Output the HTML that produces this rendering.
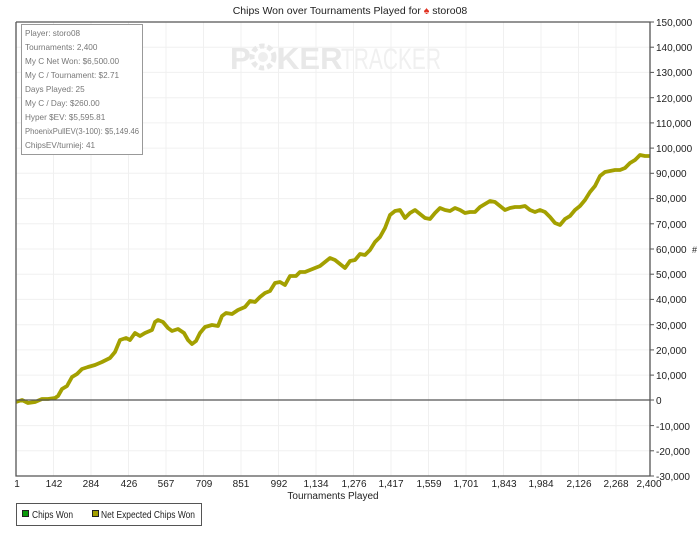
<!DOCTYPE html>
<html><head><meta charset="utf-8"><style>
html,body{margin:0;padding:0;background:#fff;}
body{width:700px;height:538px;overflow:hidden;font-family:"Liberation Sans",Arial,sans-serif;}
</style></head><body>
<svg width="700" height="538" xmlns="http://www.w3.org/2000/svg" style="position:absolute;left:0;top:0">
<g stroke="#f0f0f0" stroke-width="1">
<line x1="53.5" y1="22" x2="53.5" y2="476"/><line x1="91" y1="22" x2="91" y2="476"/><line x1="128.5" y1="22" x2="128.5" y2="476"/><line x1="166" y1="22" x2="166" y2="476"/><line x1="203.5" y1="22" x2="203.5" y2="476"/><line x1="241" y1="22" x2="241" y2="476"/><line x1="278.5" y1="22" x2="278.5" y2="476"/><line x1="316" y1="22" x2="316" y2="476"/><line x1="353.5" y1="22" x2="353.5" y2="476"/><line x1="391" y1="22" x2="391" y2="476"/><line x1="428.5" y1="22" x2="428.5" y2="476"/><line x1="466" y1="22" x2="466" y2="476"/><line x1="503.5" y1="22" x2="503.5" y2="476"/><line x1="541" y1="22" x2="541" y2="476"/><line x1="578.5" y1="22" x2="578.5" y2="476"/><line x1="616" y1="22" x2="616" y2="476"/>
<line x1="16" y1="47.2" x2="650" y2="47.2"/><line x1="16" y1="72.4" x2="650" y2="72.4"/><line x1="16" y1="97.7" x2="650" y2="97.7"/><line x1="16" y1="122.9" x2="650" y2="122.9"/><line x1="16" y1="148.1" x2="650" y2="148.1"/><line x1="16" y1="173.3" x2="650" y2="173.3"/><line x1="16" y1="198.6" x2="650" y2="198.6"/><line x1="16" y1="223.8" x2="650" y2="223.8"/><line x1="16" y1="249" x2="650" y2="249"/><line x1="16" y1="274.2" x2="650" y2="274.2"/><line x1="16" y1="299.4" x2="650" y2="299.4"/><line x1="16" y1="324.7" x2="650" y2="324.7"/><line x1="16" y1="349.9" x2="650" y2="349.9"/><line x1="16" y1="375.1" x2="650" y2="375.1"/><line x1="16" y1="425.6" x2="650" y2="425.6"/><line x1="16" y1="450.8" x2="650" y2="450.8"/>
</g>
<text x="230" y="69" font-size="31" font-weight="bold" fill="#e8e8e8">P</text>
<circle cx="263" cy="57" r="11" fill="none" stroke="#e8e8e8" stroke-width="5" stroke-dasharray="5 3"/>
<circle cx="263" cy="57" r="5" fill="#eeeeee"/>
<text x="277" y="69" font-size="31" font-weight="bold" fill="#e8e8e8">KER</text>
<text x="341" y="69" font-size="30" fill="#f0f0f0" textLength="100" lengthAdjust="spacingAndGlyphs">TRACKER</text>
<text x="350" y="14" font-size="10.5" fill="#222" text-anchor="middle">Chips Won over Tournaments Played for <tspan fill="#e03020">♠</tspan> storo08</text>
<polyline fill="none" stroke="#a3a000" stroke-width="3.8" stroke-linejoin="round" points="16,402 22,400 28,403 35,402 42,399 48,399 55,398 58,396 62,389 67,386 72,377 77,374 82,369 88,367 95,365 102,362 110,358 115,352 120,340 126,338 130,340 135,333 140,336 145,333 152,330 155,322 158,320 163,322 168,328 172,331 178,329 184,333 188,340 192,344 196,341 200,333 205,327 212,325 218,326 222,316 226,313 232,314 238,310 245,307 250,301 255,302 260,297 265,293 270,291 275,283 280,282 285,285 290,276 296,276 300,272 305,272 310,270 315,268 320,266 325,262 330,258 335,260 340,264 345,268 350,261 355,260 360,254 365,255 370,250 375,242 380,237 385,228 390,215 395,211 400,210 405,218 410,213 415,210 420,214 425,218 430,219 435,213 440,208 445,210 450,211 455,208 460,210 465,213 470,212 475,212 480,207 485,204 490,201 495,202 500,206 505,210 510,208 515,207 520,207 525,206 530,210 535,212 540,210 545,212 550,217 555,223 560,225 565,219 570,216 575,210 580,206 585,200 590,192 595,186 600,176 605,172 610,171 615,170 620,170 625,168 630,163 635,160 640,155 645,156 650,156"/>
<g stroke="#555" stroke-width="1.3" fill="none">
<line x1="16" y1="400" x2="650" y2="400"/>
<polyline points="16,22 650,22 650,476 16,476 16,22"/>
</g>
<g stroke="#555" stroke-width="1">
<line x1="650" y1="22" x2="654" y2="22"/><line x1="650" y1="47.2" x2="654" y2="47.2"/><line x1="650" y1="72.4" x2="654" y2="72.4"/><line x1="650" y1="97.7" x2="654" y2="97.7"/><line x1="650" y1="122.9" x2="654" y2="122.9"/><line x1="650" y1="148.1" x2="654" y2="148.1"/><line x1="650" y1="173.3" x2="654" y2="173.3"/><line x1="650" y1="198.6" x2="654" y2="198.6"/><line x1="650" y1="223.8" x2="654" y2="223.8"/><line x1="650" y1="249" x2="654" y2="249"/><line x1="650" y1="274.2" x2="654" y2="274.2"/><line x1="650" y1="299.4" x2="654" y2="299.4"/><line x1="650" y1="324.7" x2="654" y2="324.7"/><line x1="650" y1="349.9" x2="654" y2="349.9"/><line x1="650" y1="375.1" x2="654" y2="375.1"/><line x1="650" y1="400" x2="654" y2="400"/><line x1="650" y1="425.6" x2="654" y2="425.6"/><line x1="650" y1="450.8" x2="654" y2="450.8"/><line x1="650" y1="476" x2="654" y2="476"/>
</g>
<g font-size="10" fill="#222">
<text x="656" y="26">150,000</text><text x="656" y="51">140,000</text><text x="656" y="76">130,000</text><text x="656" y="102">120,000</text><text x="656" y="127">110,000</text><text x="656" y="152">100,000</text><text x="656" y="177">90,000</text><text x="656" y="202">80,000</text><text x="656" y="228">70,000</text><text x="656" y="253">60,000</text><text x="656" y="278">50,000</text><text x="656" y="303">40,000</text><text x="656" y="329">30,000</text><text x="656" y="354">20,000</text><text x="656" y="379">10,000</text><text x="656" y="404">0</text><text x="656" y="430">-10,000</text><text x="656" y="455">-20,000</text><text x="656" y="480">-30,000</text>
<text x="692" y="253" font-size="9">#</text>
</g>
<g font-size="10" fill="#222" text-anchor="middle">
<text x="17" y="487">1</text><text x="54" y="487">142</text><text x="91" y="487">284</text><text x="129" y="487">426</text><text x="166" y="487">567</text><text x="204" y="487">709</text><text x="241" y="487">851</text><text x="279" y="487">992</text><text x="316" y="487">1,134</text><text x="354" y="487">1,276</text><text x="391" y="487">1,417</text><text x="429" y="487">1,559</text><text x="466" y="487">1,701</text><text x="504" y="487">1,843</text><text x="541" y="487">1,984</text><text x="579" y="487">2,126</text><text x="616" y="487">2,268</text><text x="649" y="487">2,400</text>
<text x="333" y="499">Tournaments Played</text>
</g>
<rect x="21.5" y="24.5" width="121" height="130" fill="#fff" stroke="#999"/>
<g font-size="8.2" fill="#777">
<text x="25" y="36">Player: storo08</text><text x="25" y="50">Tournaments: 2,400</text><text x="25" y="64">My C Net Won: $6,500.00</text><text x="25" y="78">My C / Tournament: $2.71</text><text x="25" y="92">Days Played: 25</text><text x="25" y="106">My C / Day: $260.00</text><text x="25" y="120">Hyper $EV: $5,595.81</text><text x="25" y="134" textLength="114" lengthAdjust="spacingAndGlyphs">PhoenixPullEV(3-100): $5,149.46</text><text x="25" y="148">ChipsEV/turniej: 41</text>
</g>
<rect x="16.5" y="503.5" width="185" height="22" fill="#fff" stroke="#555"/>
<rect x="22.5" y="510.5" width="6" height="6" fill="#0a9a0a" stroke="#222"/>
<text x="32" y="518" font-size="10" fill="#222" textLength="41" lengthAdjust="spacingAndGlyphs">Chips Won</text>
<rect x="92.5" y="510.5" width="6" height="6" fill="#a3a000" stroke="#222"/>
<text x="101" y="518" font-size="10" fill="#222" textLength="94" lengthAdjust="spacingAndGlyphs">Net Expected Chips Won</text>
</svg>
</body></html>
